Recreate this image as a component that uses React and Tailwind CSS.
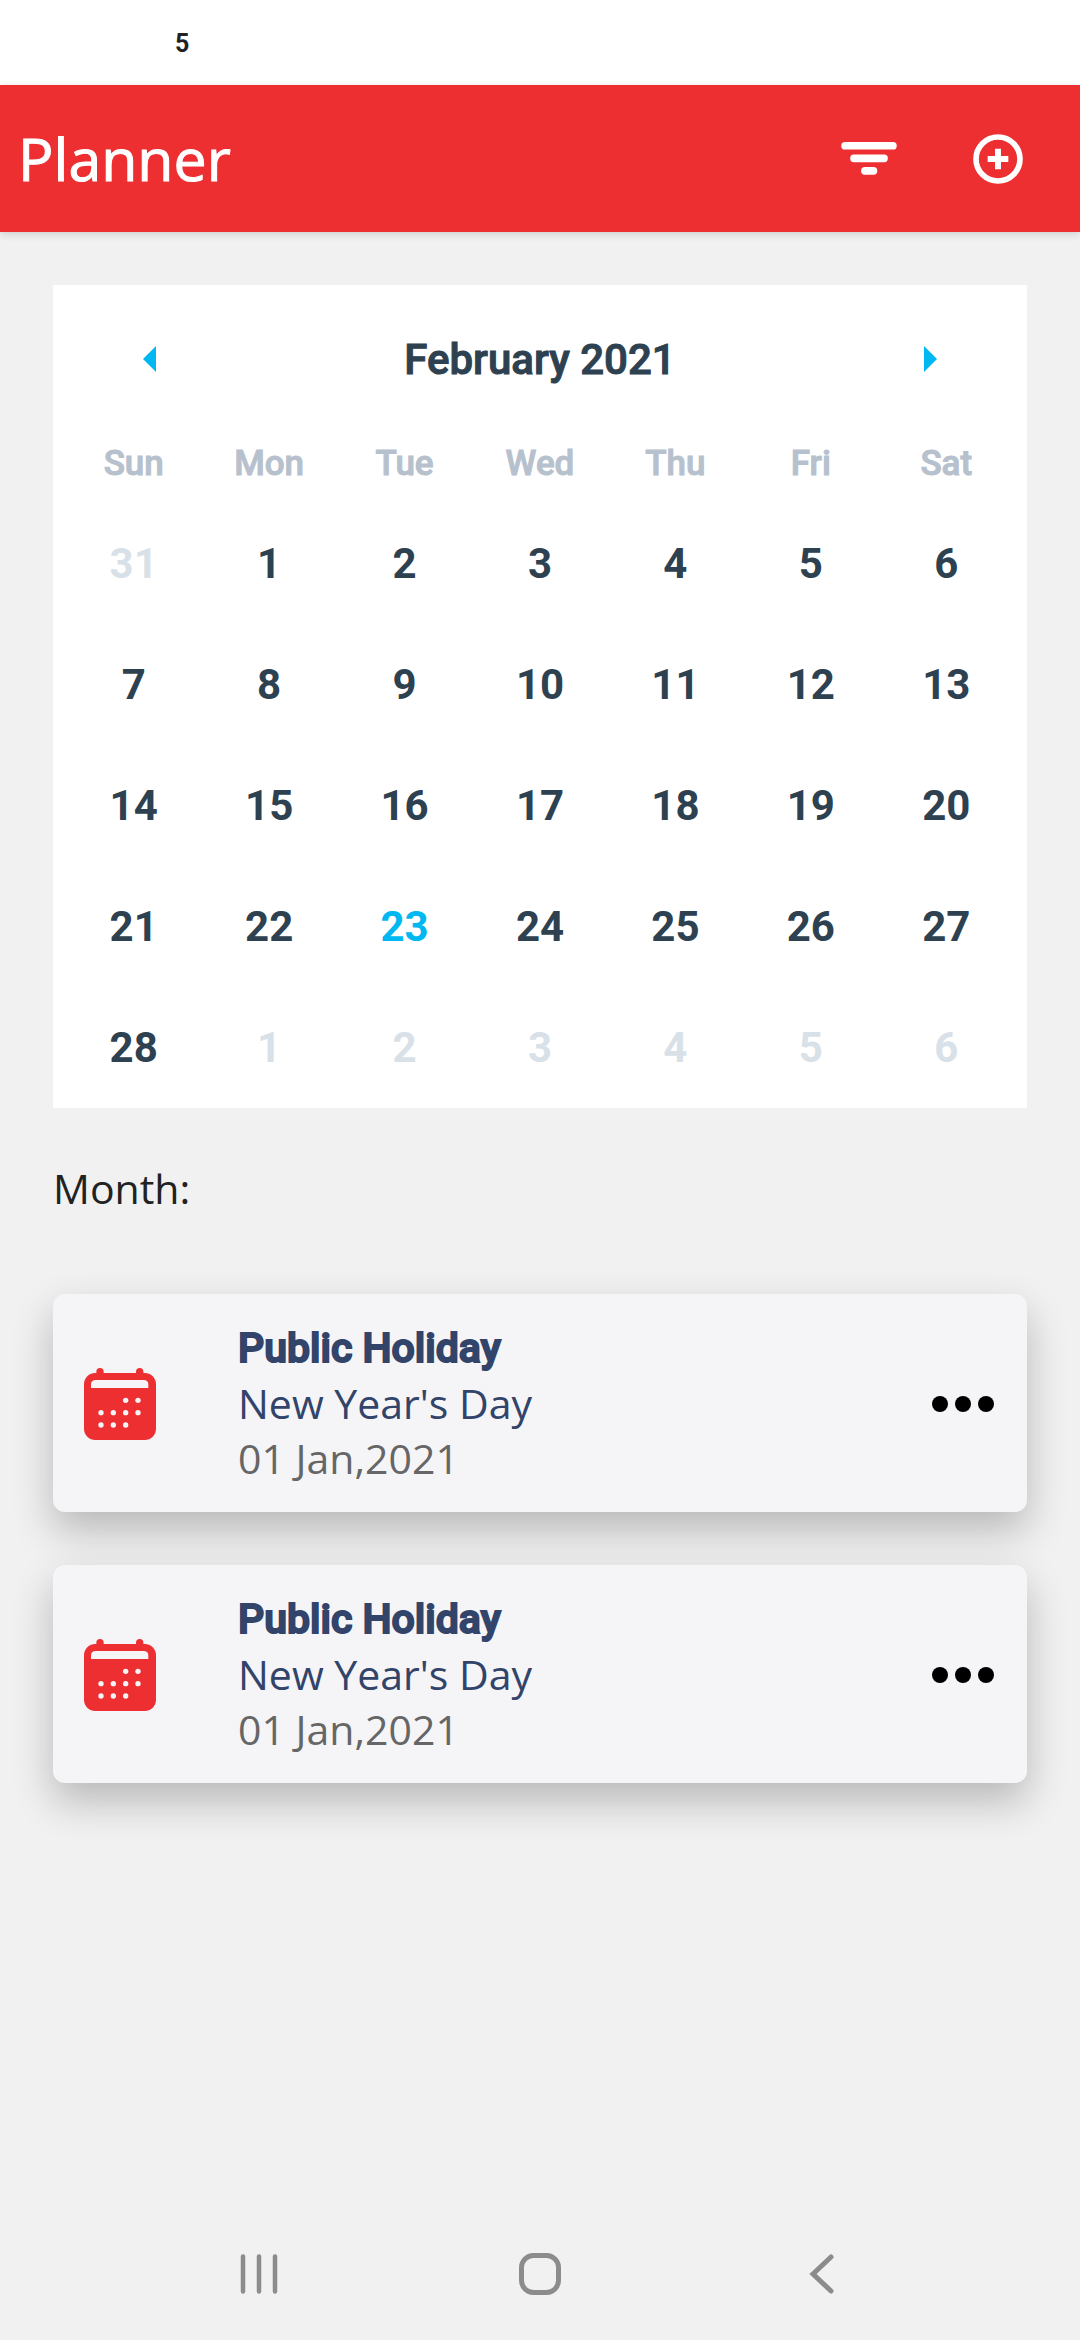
import React from "react";

const weekdays = ["Sun", "Mon", "Tue", "Wed", "Thu", "Fri", "Sat"];

const weeks = [
  [31, 1, 2, 3, 4, 5, 6],
  [7, 8, 9, 10, 11, 12, 13],
  [14, 15, 16, 17, 18, 19, 20],
  [21, 22, 23, 24, 25, 26, 27],
  [28, 1, 2, 3, 4, 5, 6],
];

const events = [
  { id: 1, title: "Public Holiday", name: "New Year's Day", date: "01 Jan,2021" },
  { id: 2, title: "Public Holiday", name: "New Year's Day", date: "01 Jan,2021" },
];

function dayColor(week, index, day) {
  const outside = (week === 0 && day > 20) || (week === 4 && index > 0);
  if (outside) return "text-[#d9e1e8]";
  if (week === 3 && day === 23) return "text-[#00b8f1]";
  return "text-[#2d4150]";
}

function FilterIcon() {
  return (
    <svg viewBox="0 0 168 100" className="h-[33px] w-14" fill="#fff" aria-hidden="true">
      <rect x="0" y="0" width="168" height="23" rx="11" />
      <rect x="27" y="38" width="114" height="23" rx="11" />
      <rect x="60" y="76" width="49" height="23" rx="11" />
    </svg>
  );
}

function AddIcon() {
  return (
    <svg viewBox="0 0 150 150" className="size-[50px]" fill="none" stroke="#fff" aria-hidden="true">
      <circle cx="75" cy="75" r="66" strokeWidth="17" />
      <path d="M75 44V106M44 75H106" strokeWidth="18" />
    </svg>
  );
}

function CalendarIcon() {
  const dots = [
    [125, 97], [162, 97],
    [51, 134], [88, 134], [125, 134], [162, 134],
    [51, 171], [88, 171], [125, 171],
  ];
  return (
    <svg viewBox="0 0 216 216" className="size-[72px] shrink-0" aria-hidden="true">
      <g fill="#ed2f32">
        <rect x="0" y="15" width="216" height="201" rx="34" />
        <rect x="37" y="0" width="22" height="40" rx="11" />
        <rect x="156" y="0" width="22" height="40" rx="11" />
      </g>
      <path d="M21 60V50Q21 36 35 36H179Q193 36 193 50V60Z" fill="#f5f5f8" />
      {dots.map(([x, y]) => (
        <circle key={`${x}-${y}`} cx={x} cy={y} r="8" fill="#f5f5f8" />
      ))}
    </svg>
  );
}

function EventCard({ event }) {
  return (
    <li className="flex items-center rounded-xl bg-[#f5f5f8] pt-[27px] pr-[33px] pb-[26px] pl-[31px] shadow-[0_18px_40px_rgba(0,0,0,0.24)]">
      <CalendarIcon />
      <div className="ml-[82px] flex-1 text-[41px] leading-[55px]">
        <h2 className="font-[Roboto,sans-serif] font-medium text-[#324469] [-webkit-text-stroke:2px_#324469]">{event.title}</h2>
        <p className="text-[#324469]">{event.name}</p>
        <p className="text-[#666]">{event.date}</p>
      </div>
      <button type="button" aria-label="More options" className="flex gap-[7px]">
        <span className="size-4 rounded-full bg-black" />
        <span className="size-4 rounded-full bg-black" />
        <span className="size-4 rounded-full bg-black" />
      </button>
    </li>
  );
}

export default function App() {
  return (
    <div className="flex min-h-screen flex-col bg-[#f1f1f1] font-['Open_Sans','Noto_Sans',sans-serif]">
      <div className="flex h-[85px] items-center bg-white pt-[2px] pl-[175px] font-[Roboto,sans-serif] text-[25px] font-bold text-[#222]">
        5
      </div>
      <header className="flex h-[147px] items-center bg-[#ed2f32] pr-[57px] pl-[18px] text-white shadow-[0_2px_8px_rgba(0,0,0,0.15)]">
        <h1 className="flex-1 text-[59px] [-webkit-text-stroke:1px_#fff]">Planner</h1>
        <button type="button" aria-label="Filter" className="mr-[76px]">
          <FilterIcon />
        </button>
        <button type="button" aria-label="Add">
          <AddIcon />
        </button>
      </header>

      <main className="flex-1 px-[53px] pt-[53px]">
        <section className="bg-white px-[13px] font-[Roboto,sans-serif] font-bold">
          <div className="flex h-[140px] items-center justify-between px-[77px] pt-2 text-[#2d4150]">
            <button type="button" aria-label="Previous month">
              <svg viewBox="0 0 13 26" className="h-[26px] w-[13px]" fill="#00b8f1" aria-hidden="true">
                <path d="M13 0V26L0 13Z" />
              </svg>
            </button>
            <h2 className="text-[42px] font-medium [-webkit-text-stroke:1px_#2d4150]">February 2021</h2>
            <button type="button" aria-label="Next month">
              <svg viewBox="0 0 13 26" className="h-[26px] w-[13px]" fill="#00b8f1" aria-hidden="true">
                <path d="M0 0V26L13 13Z" />
              </svg>
            </button>
          </div>
          <table className="w-full table-fixed text-center">
            <thead>
              <tr className="h-[78px] text-[35px] text-[#b6c1cd]">
                {weekdays.map((d) => (
                  <th key={d} scope="col" className="p-0 font-medium [-webkit-text-stroke:1px_#b6c1cd]">{d}</th>
                ))}
              </tr>
            </thead>
            <tbody>
              {weeks.map((days, w) => (
                <tr key={w} className="h-[121px] text-[42px]">
                  {days.map((day, i) => (
                    <td key={i} className="p-0">
                      <button type="button" className={dayColor(w, i, day)}>{day}</button>
                    </td>
                  ))}
                </tr>
              ))}
            </tbody>
          </table>
        </section>

        <p className="mt-[50px] mb-[76px] text-[41px] leading-[60px] text-[#222]">Month:</p>

        <ul className="flex flex-col gap-[53px]">
          {events.map((e) => (
            <EventCard key={e.id} event={e} />
          ))}
        </ul>
      </main>

      <nav className="grid h-[132px] grid-cols-3 place-items-center px-[118px]">
        <button type="button" aria-label="Recent apps">
          <svg viewBox="0 0 42 42" className="size-[42px]" stroke="#8c8c8c" strokeWidth="4.5" strokeLinecap="round" aria-hidden="true">
            <path d="M5 3.500V38.500M21 3.500V38.500M37 3.500V38.500" />
          </svg>
        </button>
        <button type="button" aria-label="Home">
          <svg viewBox="0 0 42 42" className="size-[42px]" fill="none" stroke="#8c8c8c" strokeWidth="5" aria-hidden="true">
            <rect x="2.5" y="2.5" width="37" height="37" rx="12" />
          </svg>
        </button>
        <button type="button" aria-label="Back">
          <svg viewBox="0 0 42 42" className="size-[42px]" fill="none" stroke="#8c8c8c" strokeWidth="5" strokeLinecap="round" aria-hidden="true">
            <path d="M31 4L13 21L31 38" />
          </svg>
        </button>
      </nav>
    </div>
  );
}
